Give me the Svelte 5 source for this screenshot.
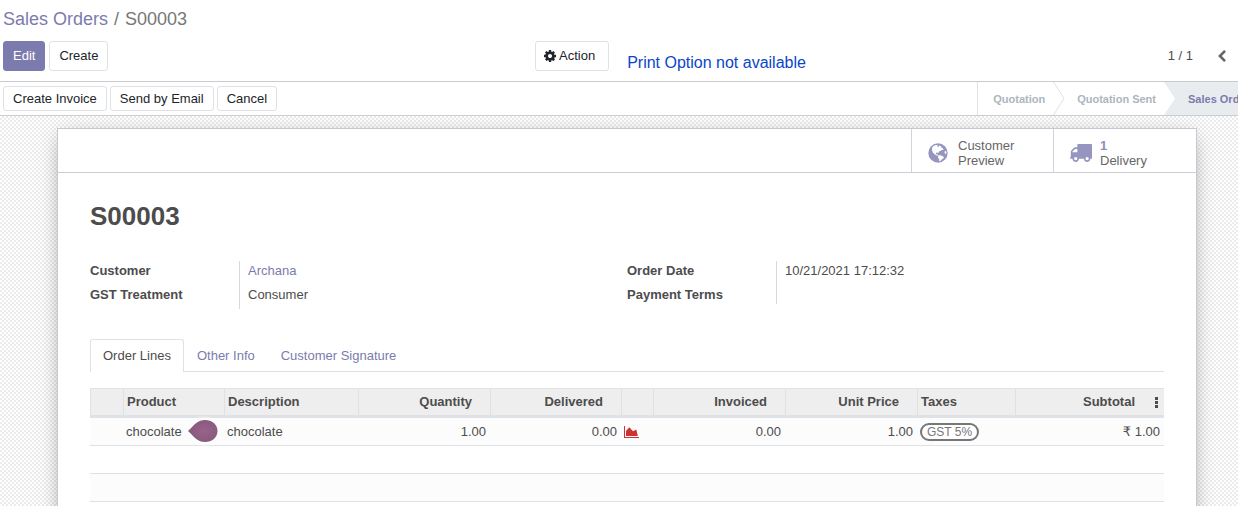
<script>
  const actions = ['Create Invoice', 'Send by Email', 'Cancel'];
  const tabs = ['Order Lines', 'Other Info', 'Customer Signature'];
  let activeTab = $state('Order Lines');
</script>

<div class="app">
  <header class="control-panel">
    <nav class="breadcrumb" aria-label="Breadcrumb">
      <a href="#orders">Sales Orders</a><span class="slash">/</span><span>S00003</span>
    </nav>
    <div class="toolbar">
      <div class="left">
        <button class="btn primary">Edit</button>
        <button class="btn">Create</button>
      </div>
      <div class="center">
        <button class="btn action">
          <svg class="cog" viewBox="128 128 1536 1536" aria-hidden="true"><path d="M1152 896q0-106-75-181t-181-75-181 75-75 181 75 181 181 75 181-75 75-181zm512-109v222q0 12-8 23t-20 13l-185 28q-19 54-39 91 35 50 107 138 10 12 10 25t-9 23q-27 37-99 108t-94 71q-12 0-26-9l-138-108q-44 23-91 38-16 136-29 186-7 28-36 28h-222q-14 0-24.500-8.500t-11.500-21.500l-28-184q-49-16-90-37l-141 107q-10 9-25 9-14 0-25-11-126-114-165-168-7-10-7-23 0-12 8-23 15-21 51-66.500t54-70.500q-27-50-41-99l-183-27q-13-2-21-12.500t-8-23.500v-222q0-12 8-23t19-13l186-28q14-46 39-92-40-57-107-138-10-12-10-24 0-10 9-23 26-36 98.500-107.500t94.500-71.500q13 0 26 10l138 107q44-23 91-38 16-136 29-186 7-28 36-28h222q14 0 24.500 8.500t11.500 21.500l28 184q49 16 90 37l142-107q9-9 24-9 13 0 25 10 129 119 165 170 7 8 7 22 0 12-8 23-15 21-51 66.500t-54 70.500q26 50 41 98l183 28q13 2 21 12.500t8 23.500z" /></svg>
          Action
        </button>
        <span class="notice">Print Option not available</span>
      </div>
      <div class="pager">
        <span>1 / 1</span>
        <button class="prev" aria-label="Previous">
          <svg viewBox="410 26 1036 1612" aria-hidden="true"><path d="M1427 301l-531 531 531 531q19 19 19 45t-19 45l-166 166q-19 19-45 19t-45-19l-742-742q-19-19-19-45t19-45l742-742q19-19 45-19t45 19l166 166q19 19 19 45t-19 45z" /></svg>
        </button>
      </div>
    </div>
  </header>

  <div class="statusbar">
    <div class="status-buttons">
      {#each actions as label}
        <button class="btn small">{label}</button>
      {/each}
    </div>
    <div class="stages">
      <div class="stage first">Quotation</div>
      <div class="stage">
        <svg class="arrow" viewBox="0 0 12 33" aria-hidden="true"><path d="M0.500 0 L11 16.500 L0.500 33" fill="none" stroke="#dee2e6" /></svg>
        Quotation Sent
      </div>
      <div class="stage current">
        <svg class="arrow" viewBox="0 0 12 33" aria-hidden="true"><path d="M0 0 L11 16.500 L0 33z" fill="#fff" /></svg>
        Sales Order
      </div>
    </div>
  </div>

  <main class="form-view">
    <section class="sheet">
      <div class="button-box">
        <button class="stat">
          <svg class="globe" viewBox="0 0 20 20" aria-hidden="true">
            <circle cx="10" cy="10" r="9.700" />
            <path class="land" d="M5.200 3.200 L7.500 2 L9.800 2.100 L9 3.300 L10.400 4.100 L11.200 2.600 L13.300 3.400 L13.100 4.600 L14.700 5 L15.600 6.800 L13.800 7.100 L12.500 8.100 L11.200 8.300 L10.300 10.100 L8.500 9.600 L7.600 10.600 L8.700 11.500 L9.900 11.300 L10 12.600 L8.500 12.500 L6.600 11.200 L4.800 9.600 L4 7.100 L4.100 4.800z" />
            <path class="land" d="M10.300 12.300 L12.400 12.200 L14.200 13.100 L15.900 14 L15.300 15.500 L13.900 16.200 L12.800 17.600 L11.200 18.500 L11.200 16.300 L10 14.500z" />
            <path class="land" d="M16.800 8.200 L18.100 7.900 L18.500 10.300 L17.600 11.200 L16.600 10.100z" />
          </svg>
          <span>Customer<br />Preview</span>
        </button>
        <button class="stat">
          <svg class="truck" viewBox="64 256 1728 1408" aria-hidden="true"><path d="M640 1408q0-52-38-90t-90-38-90 38-38 90 38 90 90 38 90-38 38-90zm-384-512h384v-256h-158q-13 0-22 9l-195 195q-9 9-9 22v30zm1280 512q0-52-38-90t-90-38-90 38-38 90 38 90 90 38 90-38 38-90zm256-1088v1024q0 15-4 26.500t-13.500 18.500-16.500 11.500-23.500 6-22.500 2-25.500 0-22.500-.500q0 106-75 181t-181 75-181-75-75-181h-384q0 106-75 181t-181 75-181-75-75-181h-64q-3 0-22.500.500t-25.500 0-22.500-2-23.500-6-16.500-11.500-13.500-18.500-4-26.500q0-26 19-45t45-19v-320q0-8-.500-35t0-38 2.500-34.500 6.500-37 14-30.500 22.500-30l198-198q19-19 50.500-32t58.500-13h160v-192q0-26 19-45t45-19h1024q26 0 45 19t19 45z" /></svg>
          <span><b>1</b><br />Delivery</span>
        </button>
      </div>

      <div class="body">
        <h1>S00003</h1>

        <div class="groups">
          <dl class="group">
            <dt>Customer</dt>
            <dd><a href="#customer">Archana</a></dd>
            <dt>GST Treatment</dt>
            <dd>Consumer</dd>
          </dl>
          <dl class="group">
            <dt>Order Date</dt>
            <dd>10/21/2021 17:12:32</dd>
            <dt>Payment Terms</dt>
            <dd class="empty"></dd>
          </dl>
        </div>

        <div class="tabs" role="tablist">
          {#each tabs as tab}
            <button role="tab" class="tab" class:active={tab === activeTab} aria-selected={tab === activeTab} onclick={() => (activeTab = tab)}>{tab}</button>
          {/each}
        </div>

        <table>
          <colgroup>
            <col class="c-handle" /><col class="c-product" /><col /><col class="c-num" /><col class="c-delivered" />
            <col class="c-icon" /><col class="c-num" /><col class="c-num" /><col class="c-tax" /><col class="c-total" />
          </colgroup>
          <thead>
            <tr>
              <th></th>
              <th>Product</th>
              <th>Description</th>
              <th class="num">Quantity</th>
              <th class="num">Delivered</th>
              <th></th>
              <th class="num">Invoiced</th>
              <th class="num">Unit Price</th>
              <th>Taxes</th>
              <th class="num total">
                <span>Subtotal</span>
                <button class="more" aria-label="Optional columns">
                  <svg viewBox="0 0 4 11" aria-hidden="true"><path d="M0 0h3v3H0zM0 4h3v3H0zM0 8h3v3H0z" /></svg>
                </button>
              </th>
            </tr>
          </thead>
          <tbody>
            <tr>
              <td></td>
              <td class="product">
                chocolate
                <svg class="drop" viewBox="0 0 36 30" aria-hidden="true">
                  <defs>
                    <radialGradient id="plum" cx="55%" cy="50%" r="55%">
                      <stop offset="0" stop-color="#99628b" />
                      <stop offset="1" stop-color="#875a7b" />
                    </radialGradient>
                  </defs>
                  <path class="halo" d="M3 15 L10 8 C15 1 33 2 33 15 C33 28 15 29 10 22z" />
                  <path fill="url(#plum)" d="M4 15 C9 10.500 13 4 21 4 C28 4 33.500 8.500 33.500 15 C33.500 21.500 28 26 21 26 C13 26 9 19.500 4 15z" />
                </svg>
              </td>
              <td>chocolate</td>
              <td class="num">1.00</td>
              <td class="num">0.00</td>
              <td>
                <svg class="chart" viewBox="0 0 15 12" aria-hidden="true"><path d="M0 0h1v11h14v1H0zM2 10V5L5.300 1.200L9 5.200L12.300 3.600L13.800 10z" /></svg>
              </td>
              <td class="num">0.00</td>
              <td class="num">1.00</td>
              <td><span class="tag">GST 5%</span></td>
              <td class="num"><span class="rupee">₹</span> 1.00</td>
            </tr>
            {#each [1, 2, 3] as row (row)}
              <tr><td colspan="10"></td></tr>
            {/each}
          </tbody>
        </table>
      </div>
    </section>
  </main>
</div>

<style>
  :global(body) {
    margin: 0;
    overflow: hidden;
  }
  .app {
    display: flex;
    flex-direction: column;
    height: 100vh;
    overflow: hidden;
    background: #fff;
    color: #4c4c4c;
    font: 13px/20px "Liberation Sans", Arial, sans-serif;
  }
  .app * {
    box-sizing: border-box;
  }
  a {
    color: #7c7bad;
    text-decoration: none;
  }
  button {
    font: inherit;
    color: inherit;
    background: none;
    border: 0;
    padding: 0;
    margin: 0;
    cursor: pointer;
  }
  svg {
    display: block;
    flex: none;
    fill: currentColor;
  }

  .control-panel {
    padding: 8px 3px 10px;
    border-bottom: 1px solid #cacad0;
  }
  .breadcrumb {
    font-size: 18px;
    line-height: 22px;
    color: #777;
  }
  .slash {
    margin: 0 6px;
  }
  .toolbar {
    display: grid;
    grid-template-columns: 532px 1fr auto;
    margin-top: 11px;
  }
  .left {
    display: flex;
    gap: 4px;
  }
  .btn {
    height: 30px;
    padding: 0 9px;
    border: 1px solid #dee2e6;
    border-radius: 3px;
    background: #fff;
    color: #212529;
    white-space: nowrap;
  }
  .btn.primary {
    background: #7c7bad;
    border-color: #7c7bad;
    color: #fff;
  }
  .btn.small {
    height: 25px;
    line-height: 23px;
  }
  .center {
    display: flex;
    gap: 18px;
  }
  .action {
    display: flex;
    align-items: center;
    gap: 4px;
    padding: 0 13px 0 8px;
  }
  .cog {
    width: 12px;
    height: 12px;
    margin-right: -1px;
  }
  .notice {
    padding-top: 14px;
    font-size: 16px;
    line-height: 16px;
    color: #0b45c9;
  }
  .pager {
    display: flex;
    align-items: center;
    gap: 25px;
    padding-right: 9px;
    color: #4c4c4c;
  }
  .prev svg {
    width: 8px;
    height: 12px;
    fill: #666;
  }

  .statusbar {
    display: flex;
    justify-content: space-between;
    height: 34px;
    padding-left: 3px;
    border-bottom: 1px solid #cacdd4;
  }
  .status-buttons {
    display: flex;
    align-items: center;
    gap: 3px;
  }
  .stages {
    display: flex;
    border-left: 1px solid #dee2e6;
    font-size: 11px;
    font-weight: bold;
    color: #adb5bd;
    white-space: nowrap;
  }
  .stage {
    display: flex;
    align-items: center;
    gap: 12px;
    padding-right: 8px;
  }
  .stage.first {
    padding-left: 15px;
  }
  .stage.current {
    width: 74px;
    padding-right: 0;
    overflow: hidden;
    background: #e9ecef;
    color: #7c7bad;
  }
  .arrow {
    width: 12px;
    height: 33px;
  }

  .form-view {
    flex: 1;
    min-height: 0;
    overflow: hidden;
    padding: 12px 41px 0 57px;
    background: repeating-conic-gradient(#ebebeb 0 25%, #fff 0 50%) 0 0 / 4px 4px;
  }
  .sheet {
    border: 1px solid #c8c8d3;
    background: #fff;
    box-shadow: 0 5px 20px -5px rgba(0, 0, 0, 0.4);
  }
  .button-box {
    display: flex;
    justify-content: flex-end;
    height: 44px;
    border-bottom: 1px solid #cdcdd6;
  }
  .stat {
    display: flex;
    align-items: center;
    width: 142px;
    padding: 4px 0 0 16px;
    gap: 10px;
    border-left: 1px solid #d0d3da;
    line-height: 15px;
    text-align: left;
    color: #666;
  }
  .stat:last-child {
    width: 143px;
    gap: 8px;
  }
  .stat svg {
    fill: #9695c0;
  }
  .stat b {
    color: #8f8ebb;
  }
  .globe {
    width: 20px;
    height: 20px;
  }
  .globe .land {
    fill: #fff;
  }
  .truck {
    width: 22px;
    height: 18px;
  }

  .body {
    padding: 27px 32px 0;
  }
  h1 {
    margin: 0;
    font-size: 26px;
    line-height: 32px;
  }
  .groups {
    display: grid;
    grid-template-columns: 1fr 1fr;
    align-items: start;
    margin-top: 29px;
  }
  .group {
    display: grid;
    grid-template-columns: 149px 1fr;
    margin: 0;
  }
  dt {
    height: 24px;
    font-weight: bold;
  }
  dd {
    height: 24px;
    margin: 0;
    padding-left: 8px;
    border-left: 1px solid #d8d8d8;
  }
  dd.empty {
    height: 19px;
  }

  .tabs {
    display: flex;
    margin-top: 30px;
    border-bottom: 1px solid #dee2e6;
  }
  .tab {
    height: 32px;
    padding: 0 12px;
    border: 1px solid transparent;
    border-bottom: 0;
    border-radius: 3px 3px 0 0;
    color: #7c7bad;
  }
  .tab.active {
    height: 33px;
    margin-bottom: -1px;
    border-color: #dee2e6;
    background: #fff;
    color: #4c4c4c;
  }

  table {
    width: 100%;
    margin-top: 16px;
    table-layout: fixed;
    border-collapse: separate;
    border-spacing: 0;
  }
  .c-handle { width: 33px; }
  .c-product { width: 101px; }
  .c-num { width: 132px; }
  .c-delivered { width: 131px; }
  .c-icon { width: 32px; }
  .c-tax { width: 98px; }
  .c-total { width: 149px; }
  th {
    height: 30px;
    padding: 0 3px;
    border: 1px solid #dee2e6;
    border-width: 1px 0 3px 1px;
    background: #eee;
    text-align: left;
    white-space: nowrap;
  }
  th.num {
    padding-right: 18px;
  }
  td {
    height: 28px;
    padding: 0 4px 0 3px;
    border-bottom: 1px solid #dee2e6;
    white-space: nowrap;
  }
  tbody tr:nth-child(odd) {
    background: #fcfcfc;
  }
  .num {
    text-align: right;
  }
  th.total {
    position: relative;
    padding-right: 29px;
  }
  .more {
    position: absolute;
    top: 8px;
    right: 5px;
  }
  .more svg {
    width: 4px;
    height: 11px;
  }
  .product {
    position: relative;
  }
  .drop {
    position: absolute;
    top: -2px;
    left: 61px;
    width: 36px;
    height: 30px;
  }
  .halo {
    fill: #fff;
    filter: drop-shadow(0 0 2px #fff) drop-shadow(0 0 2px #fff);
  }
  .chart {
    width: 15px;
    height: 12px;
    color: #cc3333;
  }
  .rupee {
    font-family: "DejaVu Sans", sans-serif;
    line-height: 1;
  }
  .tag {
    display: block;
    width: max-content;
    padding: 0 5px;
    border: 2px solid #777;
    border-radius: 9px;
    background: #fff;
    font-size: 12px;
    line-height: 14px;
    color: #777;
  }
</style>
